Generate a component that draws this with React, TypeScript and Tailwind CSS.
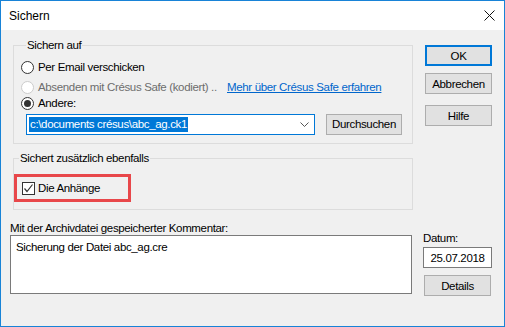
import React from "react";

const font = { fontFamily: '"Liberation Sans", Arial, sans-serif' };

const Radio = ({ checked, disabled }: { checked?: boolean; disabled?: boolean }) => (
  <span
    className={`flex h-[13px] w-[13px] shrink-0 items-center justify-center rounded-full border bg-white ${
      disabled ? "border-[#cccccc] bg-[#f0f0f0]" : "border-[#333333]"
    }`}
  >
    {checked && <span className="h-[7px] w-[7px] rounded-full bg-[#333333]" />}
  </span>
);

const Btn = ({ label, primary }: { label: string; primary?: boolean }) => (
  <button
    className={`flex h-[21px] w-[67px] items-center justify-center bg-[#e1e1e1] text-black ${
      primary ? "border-2 border-[#0078d7]" : "border border-[#adadad]"
    }`}
  >
    {label}
  </button>
);

export default function App() {
  return (
    <div
      style={font}
      className="flex h-[327px] w-[505px] flex-col overflow-hidden border border-[#1883d7] bg-[#f0f0f0] text-[11.5px] leading-[14px] tracking-[-0.35px] text-black"
    >
      {/* Title bar */}
      <div className="flex h-[29px] shrink-0 items-center justify-between bg-white pl-[8px] pr-[9px]">
        <span className="text-[12px] tracking-normal">Sichern</span>
        <svg width="11" height="11" viewBox="0 0 11 11">
          <path d="M0.5 0.5 L10.5 10.5 M10.5 0.5 L0.5 10.5" stroke="#111" strokeWidth="1" />
        </svg>
      </div>

      <div className="flex flex-1 flex-col">
        {/* Top part */}
        <div className="flex">
          <div className="ml-[12px] mt-[8px] w-[400px]">
            <fieldset className="border border-[#dcdcdc] pb-[8px] pl-[7px] pr-[8px]">
              <legend className="ml-[5px] px-[1px]">Sichern auf</legend>
              <div className="mt-[7px] flex h-[16px] items-center gap-[4px]">
                <Radio />
                <span>Per Email verschicken</span>
              </div>
              <div className="mt-[4px] flex h-[16px] items-center whitespace-nowrap">
                <Radio disabled />
                <span className="ml-[4px] w-[186px] text-[#6d6d6d]">Absenden mit Crésus Safe (kodiert) ..</span>
                <span className="ml-[3px] text-[#0066cc] underline">Mehr über Crésus Safe erfahren</span>
              </div>
              <div className="flex h-[16px] items-center gap-[4px]">
                <Radio checked />
                <span>Andere:</span>
              </div>
              <div className="mt-[2px] flex h-[22px] items-center pl-[5px]">
                <div className="flex h-[21px] w-[289px] items-center justify-between border border-[#0078d7] bg-white pl-[2px] pr-[5px]">
                  <span className="bg-[#0078d7] px-[1px] leading-[15px] text-white">c:\documents crésus\abc_ag.ck1</span>
                  <svg width="9" height="5" viewBox="0 0 9 5">
                    <path d="M0.5 0.5 L4.5 4.5 L8.5 0.5" fill="none" stroke="#555" strokeWidth="1" />
                  </svg>
                </div>
                <button className="ml-[11px] flex h-[21px] w-[76px] items-center justify-center border border-[#adadad] bg-[#e1e1e1]">
                  Durchsuchen
                </button>
              </div>
            </fieldset>

            <fieldset className="mt-[7px] border border-[#dcdcdc] pb-[7px]">
              <legend className="ml-[5px] px-[1px]">Sichert zusätzlich ebenfalls</legend>
              <div className="mt-[9px] flex h-[28px] w-[117px] items-center border-[3px] border-[#e8474a] pl-[5px]">
                <span className="flex h-[13px] w-[13px] items-center justify-center border border-[#333333] bg-white">
                  <svg width="11" height="11" viewBox="0 0 11 11">
                    <path d="M1.5 5.5 L4 8.5 L9.5 1.5" fill="none" stroke="#333" strokeWidth="1.2" />
                  </svg>
                </span>
                <span className="ml-[3px]">Die Anhänge</span>
              </div>
            </fieldset>
          </div>

          <div className="ml-[12px] mt-[15px] flex flex-col">
            <Btn label="OK" primary />
            <div className="mt-[7px]">
              <Btn label="Abbrechen" />
            </div>
            <div className="mt-[11px]">
              <Btn label="Hilfe" />
            </div>
          </div>
        </div>

        {/* Bottom part */}
        <div className="mt-[11px] flex">
          <div className="ml-[9px] flex flex-col">
            <span>Mit der Archivdatei gespeicherter Kommentar:</span>
            <div className="h-[59px] w-[402px] border border-[#7a7a7a] bg-white px-[5px] py-[4px]">
              Sicherung der Datei abc_ag.cre
            </div>
          </div>
          <div className="ml-[11px] mt-[10px] flex flex-col">
            <span>Datum:</span>
            <div className="mt-[2px] flex h-[21px] w-[69px] items-center justify-center border border-[#7a7a7a] bg-white">
              25.07.2018
            </div>
            <div className="ml-[1px] mt-[7px]">
              <Btn label="Details" />
            </div>
          </div>
        </div>
      </div>
    </div>
  );
}
